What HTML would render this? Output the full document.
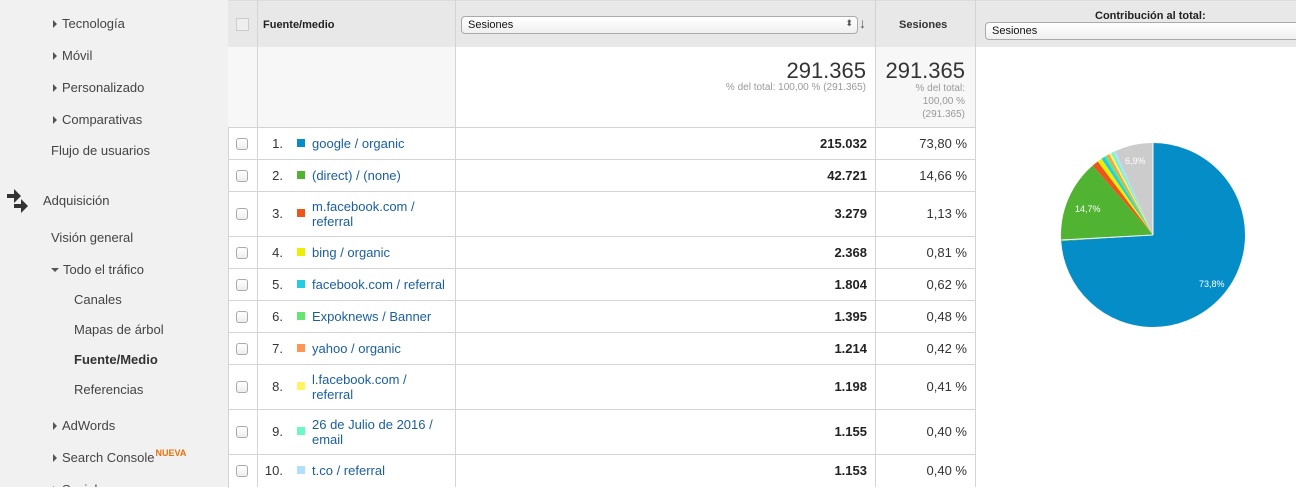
<!DOCTYPE html>
<html><head><meta charset="utf-8"><style>
*{margin:0;padding:0;box-sizing:border-box}
body{width:1296px;height:487px;overflow:hidden;background:#fff;font-family:"Liberation Sans",Arial,sans-serif;position:relative}
.sb{position:absolute;left:0;top:0;width:228px;height:487px;background:#f1f1f1;overflow:hidden}
.sb div{position:absolute;font-size:13px;color:#444;white-space:nowrap}
.tri{display:inline-block;width:0;height:0;border-left:4px solid #555;border-top:4px solid transparent;border-bottom:4px solid transparent;margin-right:5px;vertical-align:0}
.trid{display:inline-block;width:0;height:0;border-top:4px solid #555;border-left:4px solid transparent;border-right:4px solid transparent;margin-right:4px;vertical-align:2px}
.a{position:absolute}
.hdr{position:absolute;top:0;height:47px;background:#e8e8e8;border-top:1px solid #ddd}
.vl{position:absolute;width:1px;background:#d4d4d4}
.hl{position:absolute;height:1px;background:#d4d4d4;left:228px;width:748px}
.cb{position:absolute;left:236px;width:12px;height:12px;border:1px solid #aaa;border-radius:3px;background:linear-gradient(#fff,#eee)}
.num{position:absolute;width:26px;left:257px;text-align:right;font-size:13px;color:#333}
.sw{position:absolute;left:297px;width:8px;height:8px}
.lk{position:absolute;left:312px;font-size:13px;color:#1a5e9e;line-height:15px;width:140px}
.v{position:absolute;right:429px;font-size:13px;font-weight:bold;color:#222;text-align:right}
.p{position:absolute;right:329px;font-size:13px;color:#333;text-align:right}
</style></head><body>
<div class="sb">
<div style="left:53px;top:16px"><span class="tri"></span>Tecnología</div>
<div style="left:53px;top:48px"><span class="tri"></span>Móvil</div>
<div style="left:53px;top:80px"><span class="tri"></span>Personalizado</div>
<div style="left:53px;top:112px"><span class="tri"></span>Comparativas</div>
<div style="left:51px;top:143px">Flujo de usuarios</div>
<svg class="a" style="left:6px;top:189px" width="24" height="26" viewBox="0 0 24 26"><path d="M1 5h7V0l7 7-7 7V9H1z M8 15h7v-5l7 7-7 7v-5H8z" fill="#333"/></svg>
<div style="left:43px;top:193px">Adquisición</div>
<div style="left:51px;top:230px">Visión general</div>
<div style="left:51px;top:262px"><span class="trid"></span>Todo el tráfico</div>
<div style="left:74px;top:292px">Canales</div>
<div style="left:74px;top:322px">Mapas de árbol</div>
<div style="left:74px;top:352px;font-weight:bold;color:#333">Fuente/Medio</div>
<div style="left:74px;top:382px">Referencias</div>
<div style="left:53px;top:418px"><span class="tri"></span>AdWords</div>
<div style="left:53px;top:450px"><span class="tri"></span>Search Console<span style="color:#e8710a;font-size:9px;font-weight:bold;position:relative;top:-6px;margin-left:1px">NUEVA</span></div>
<div style="left:53px;top:482px"><span class="tri"></span>Social</div>
</div>

<div class="hdr" style="left:228px;width:1068px"></div>
<div class="a" style="left:228px;top:47px;width:747px;height:80px;background:#f7f7f7"></div>
<div class="a" style="left:455px;top:47px;width:420px;height:80px;background:#fff"></div>
<div class="a" style="left:976px;top:47px;width:320px;height:440px;background:#fff"></div>
<div class="a" style="left:236px;top:18px;width:13px;height:13px;border:1px solid #ccc;background:#eee"></div>
<div class="a" style="left:263px;top:19px;font-size:11px;font-weight:bold;color:#222">Fuente/medio</div>
<div class="a" style="left:461px;top:16px;width:397px;height:18px;border:1px solid #aaa;border-radius:4px;background:linear-gradient(#fff,#f0f0f0);font-size:11px;padding:2px 6px;color:#111">Sesiones<span style="position:absolute;right:4px;top:1px;font-size:9px;color:#555">⬍</span></div>
<div class="a" style="left:859px;top:15px;font-size:14px;color:#555">↓</div>
<div class="a" style="left:899px;top:19px;font-size:11px;font-weight:bold;color:#333">Sesiones</div>
<div class="a" style="left:1095px;top:10px;font-size:11px;font-weight:bold;color:#222">Contribución al total:</div>
<div class="a" style="left:985px;top:22px;width:320px;height:18px;border:1px solid #aaa;border-radius:4px;background:linear-gradient(#fff,#f0f0f0);font-size:11px;padding:2px 6px;color:#111">Sesiones</div>

<div class="a" style="right:430px;top:58px;font-size:22px;color:#333">291.365</div>
<div class="a" style="right:430px;top:82px;font-size:10px;color:#999">% del total: 100,00 % (291.365)</div>
<div class="a" style="right:331px;top:58px;font-size:22px;color:#333">291.365</div>
<div class="a" style="right:331px;top:82px;font-size:10px;color:#999;text-align:right;line-height:13px">% del total:<br>100,00 %<br>(291.365)</div>

<div class="vl" style="left:257px;top:0;height:487px"></div>
<div class="vl" style="left:455px;top:0;height:487px"></div>
<div class="vl" style="left:875px;top:0;height:487px"></div>
<div class="vl" style="left:975px;top:0;height:487px"></div>
<div class="hl" style="top:127px"></div>
<div class="hl" style="top:159px"></div>
<div class="hl" style="top:191px"></div>
<div class="hl" style="top:236px"></div>
<div class="hl" style="top:268px"></div>
<div class="hl" style="top:300px"></div>
<div class="hl" style="top:332px"></div>
<div class="hl" style="top:364px"></div>
<div class="hl" style="top:409px"></div>
<div class="hl" style="top:454px"></div>
<div class="a" style="left:228px;top:128px;width:1px;height:360px;background:#d4d4d4"></div>

<div class="cb" style="top:138px"></div><div class="num" style="top:136px">1.</div><div class="sw" style="top:139px;background:#058dc7"></div><div class="lk" style="top:136px">google / organic</div><div class="v" style="top:136px">215.032</div><div class="p" style="top:136px">73,80 %</div>
<div class="cb" style="top:170px"></div><div class="num" style="top:168px">2.</div><div class="sw" style="top:171px;background:#50b432"></div><div class="lk" style="top:168px">(direct) / (none)</div><div class="v" style="top:168px">42.721</div><div class="p" style="top:168px">14,66 %</div>
<div class="cb" style="top:208px"></div><div class="num" style="top:206px">3.</div><div class="sw" style="top:209px;background:#ed561b"></div><div class="lk" style="top:199px">m.facebook.com /<br>referral</div><div class="v" style="top:206px">3.279</div><div class="p" style="top:206px">1,13 %</div>
<div class="cb" style="top:247px"></div><div class="num" style="top:245px">4.</div><div class="sw" style="top:248px;background:#edef00"></div><div class="lk" style="top:245px">bing / organic</div><div class="v" style="top:245px">2.368</div><div class="p" style="top:245px">0,81 %</div>
<div class="cb" style="top:279px"></div><div class="num" style="top:277px">5.</div><div class="sw" style="top:280px;background:#24cbe5"></div><div class="lk" style="top:277px;width:150px">facebook.com / referral</div><div class="v" style="top:277px">1.804</div><div class="p" style="top:277px">0,62 %</div>
<div class="cb" style="top:311px"></div><div class="num" style="top:309px">6.</div><div class="sw" style="top:312px;background:#64e572"></div><div class="lk" style="top:309px">Expoknews / Banner</div><div class="v" style="top:309px">1.395</div><div class="p" style="top:309px">0,48 %</div>
<div class="cb" style="top:343px"></div><div class="num" style="top:341px">7.</div><div class="sw" style="top:344px;background:#ff9655"></div><div class="lk" style="top:341px">yahoo / organic</div><div class="v" style="top:341px">1.214</div><div class="p" style="top:341px">0,42 %</div>
<div class="cb" style="top:381px"></div><div class="num" style="top:379px">8.</div><div class="sw" style="top:382px;background:#fff263"></div><div class="lk" style="top:372px">l.facebook.com /<br>referral</div><div class="v" style="top:379px">1.198</div><div class="p" style="top:379px">0,41 %</div>
<div class="cb" style="top:426px"></div><div class="num" style="top:424px">9.</div><div class="sw" style="top:427px;background:#6af9c4"></div><div class="lk" style="top:417px">26 de Julio de 2016 /<br>email</div><div class="v" style="top:424px">1.155</div><div class="p" style="top:424px">0,40 %</div>
<div class="cb" style="top:465px"></div><div class="num" style="top:463px">10.</div><div class="sw" style="top:466px;background:#b2deff"></div><div class="lk" style="top:463px">t.co / referral</div><div class="v" style="top:463px">1.153</div><div class="p" style="top:463px">0,40 %</div>

<svg class="a" style="left:1061px;top:143px" width="184" height="184" viewBox="0 0 184 184">
<g transform="rotate(-90 92 92)" fill="none" stroke-width="92">
<circle cx="92" cy="92" r="46" stroke="#058dc7" stroke-dasharray="213.3 400"/>
<circle cx="92" cy="92" r="46" stroke="#50b432" stroke-dasharray="42.37 400" stroke-dashoffset="-213.3"/>
<circle cx="92" cy="92" r="46" stroke="#ed561b" stroke-dasharray="3.27 400" stroke-dashoffset="-255.67"/>
<circle cx="92" cy="92" r="46" stroke="#edef00" stroke-dasharray="2.34 400" stroke-dashoffset="-258.94"/>
<circle cx="92" cy="92" r="46" stroke="#24cbe5" stroke-dasharray="1.79 400" stroke-dashoffset="-261.28"/>
<circle cx="92" cy="92" r="46" stroke="#64e572" stroke-dasharray="1.39 400" stroke-dashoffset="-263.07"/>
<circle cx="92" cy="92" r="46" stroke="#ff9655" stroke-dasharray="1.21 400" stroke-dashoffset="-264.46"/>
<circle cx="92" cy="92" r="46" stroke="#fff263" stroke-dasharray="1.19 400" stroke-dashoffset="-265.67"/>
<circle cx="92" cy="92" r="46" stroke="#6af9c4" stroke-dasharray="1.16 400" stroke-dashoffset="-266.86"/>
<circle cx="92" cy="92" r="46" stroke="#b2deff" stroke-dasharray="1.16 400" stroke-dashoffset="-268.02"/>
<circle cx="92" cy="92" r="46" stroke="#cccccc" stroke-dasharray="19.85 400" stroke-dashoffset="-269.18"/>
</g>
<line x1="92" y1="92" x2="92" y2="0" stroke="#fff" stroke-width="1"/>
<line x1="92" y1="92" x2="0.5" y2="97" stroke="#fff" stroke-width="1"/>
<text x="138" y="144" font-size="9" fill="#fff" font-family="Liberation Sans">73,8%</text>
<text x="14" y="69" font-size="9" fill="#fff" font-family="Liberation Sans">14,7%</text>
<text x="64" y="21" font-size="9" fill="#fff" font-family="Liberation Sans">6,9%</text>
</svg>
</body></html>
